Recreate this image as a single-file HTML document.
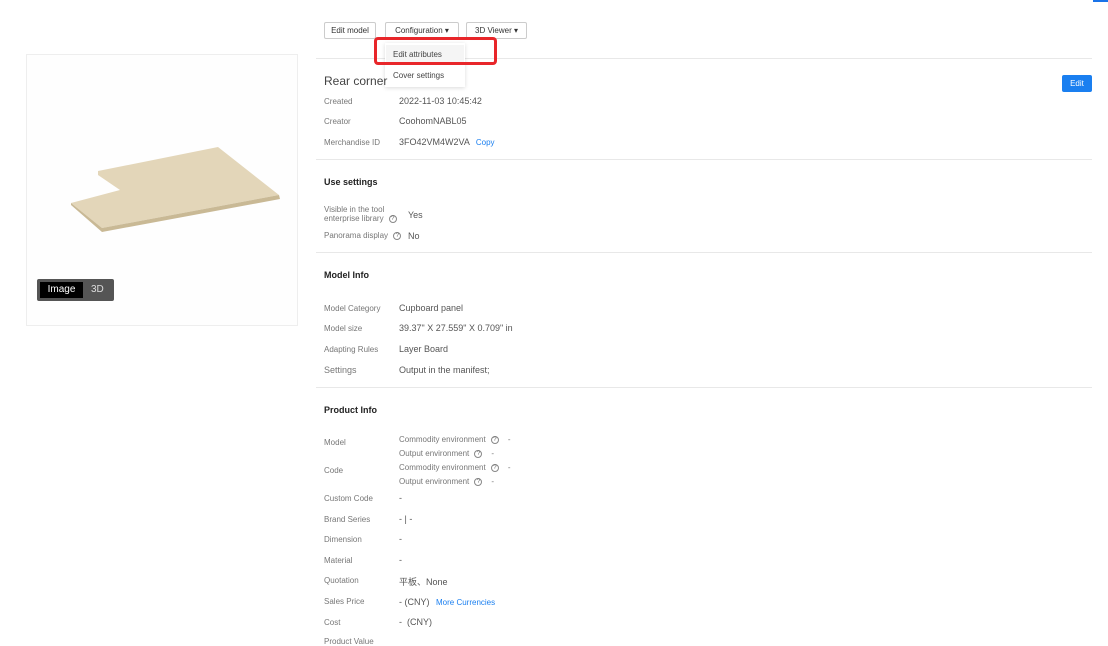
<!DOCTYPE html>
<html><head><meta charset="utf-8"><style>
*{margin:0;padding:0;box-sizing:border-box}
body{width:1108px;height:642px;background:#fff;font-family:"Liberation Sans","Noto Sans CJK SC",sans-serif;position:relative;overflow:hidden;color:#333}
.a{position:absolute;white-space:nowrap}
.btn{position:absolute;top:22px;height:17px;border:1px solid #ccc;border-radius:2px;font-size:8px;color:#333;line-height:15px;text-align:center;background:#fff}
.l{position:absolute;left:324px;font-size:8px;color:#777;white-space:nowrap}
.v{position:absolute;left:399px;font-size:9px;color:#555;white-space:nowrap}
.h{position:absolute;left:324px;font-size:9px;font-weight:bold;color:#222}
.hr{position:absolute;left:316px;width:776px;height:1px;background:#e8e8e8}
.q{display:inline-block;width:8px;height:8px;border:1px solid #888;border-radius:50%;font-size:6px;line-height:6px;text-align:center;color:#666;vertical-align:middle;margin-left:3px}
.s{color:#777;font-size:8px}
</style></head><body>
<div class="a" style="left:1093px;top:0;width:15px;height:2px;background:#1a73e8"></div>
<div class="btn" style="left:324px;width:52px">Edit model</div>
<div class="btn" style="left:385px;width:74px">Configuration ▾</div>
<div class="btn" style="left:466px;width:61px">3D Viewer ▾</div>
<div class="hr" style="top:58px"></div>
<div class="a" style="left:385px;top:43px;width:80px;height:44px;background:#fff;box-shadow:0 1px 4px rgba(0,0,0,.15)"></div>
<div class="a" style="left:386px;top:45px;width:78px;height:17px;background:#f5f5f5"></div>
<div class="a" style="left:393px;top:50px;font-size:8px;color:#444">Edit attributes</div>
<div class="a" style="left:393px;top:71px;font-size:8px;color:#444">Cover settings</div>
<div class="a" style="left:374px;top:37px;width:123px;height:28px;border:3px solid #e8262a;border-radius:4px"></div>

<div class="a" style="left:324px;top:74px;font-size:12px;color:#444">Rear corner</div>
<div class="a" style="left:1062px;top:75px;width:30px;height:17px;background:#1a7ff0;border-radius:2px;color:#fff;font-size:8px;text-align:center;line-height:17px">Edit</div>
<div class="l" style="top:97px">Created</div><div class="v" style="top:96px">2022-11-03 10:45:42</div>
<div class="l" style="top:117px">Creator</div><div class="v" style="top:116px">CoohomNABL05</div>
<div class="l" style="top:138px">Merchandise ID</div><div class="v" style="top:137px">3FO42VM4W2VA <span style="color:#1a7ff0;font-size:8px;margin-left:4px">Copy</span></div>
<div class="hr" style="top:159px"></div>
<div class="h" style="top:177px">Use settings</div>
<div class="l" style="top:205px;line-height:9px">Visible in the tool<br>enterprise library <span class="q">?</span></div><div class="v" style="top:210px;left:408px">Yes</div>
<div class="l" style="top:231px">Panorama display <span class="q">?</span></div><div class="v" style="top:231px;left:408px">No</div>
<div class="hr" style="top:252px"></div>
<div class="h" style="top:270px">Model Info</div>
<div class="l" style="top:304px">Model Category</div><div class="v" style="top:303px">Cupboard panel</div>
<div class="l" style="top:324px">Model size</div><div class="v" style="top:323px">39.37" X 27.559" X 0.709" in</div>
<div class="l" style="top:345px">Adapting Rules</div><div class="v" style="top:344px">Layer Board</div>
<div class="l" style="top:365px;font-size:9px">Settings</div><div class="v" style="top:365px">Output in the manifest;</div>
<div class="hr" style="top:387px"></div>
<div class="h" style="top:405px">Product Info</div>
<div class="l" style="top:438px">Model</div>
<div class="v s" style="top:435px">Commodity environment <span class="q">?</span> &nbsp;&nbsp; -</div>
<div class="v s" style="top:449px">Output environment <span class="q">?</span> &nbsp;&nbsp; -</div>
<div class="l" style="top:466px">Code</div>
<div class="v s" style="top:463px">Commodity environment <span class="q">?</span> &nbsp;&nbsp; -</div>
<div class="v s" style="top:477px">Output environment <span class="q">?</span> &nbsp;&nbsp; -</div>
<div class="l" style="top:494px">Custom Code</div><div class="v" style="top:493px">-</div>
<div class="l" style="top:515px">Brand Series</div><div class="v" style="top:514px">- | -</div>
<div class="l" style="top:535px">Dimension</div><div class="v" style="top:534px">-</div>
<div class="l" style="top:556px">Material</div><div class="v" style="top:555px">-</div>
<div class="l" style="top:576px">Quotation</div><div class="v" style="top:575px">平板、None</div>
<div class="l" style="top:597px">Sales Price</div><div class="v" style="top:597px">- (CNY) <span style="color:#1a7ff0;font-size:8px;margin-left:4px">More Currencies</span></div>
<div class="l" style="top:618px">Cost</div><div class="v" style="top:617px">- &nbsp;(CNY)</div>
<div class="l" style="top:637px">Product Value</div>

<div class="a" style="left:26px;top:54px;width:272px;height:272px;border:1px solid #eee;background:#fefefe"></div>
<svg class="a" style="left:0;top:0" width="310" height="340">
<polygon points="98,171 218,147 279,195 102,228 71,203 120,190 98,175" fill="#e3d6b9"/>
<polygon points="71,203 102,228 279,195 280,199 102,232 71,205" fill="#c9b995"/>
</svg>
<div class="a" style="left:37px;top:279px;width:77px;height:22px;background:#555;border-radius:2px"></div>
<div class="a" style="left:40px;top:282px;width:43px;height:16px;background:#000;color:#fff;font-size:10px;line-height:16px;text-align:center">Image</div>
<div class="a" style="left:91px;top:284px;color:#ddd;font-size:10px">3D</div>
</body></html>
